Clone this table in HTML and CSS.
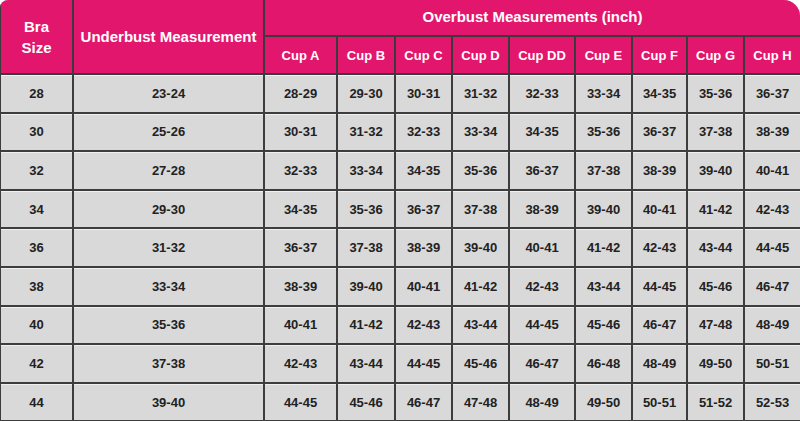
FILE: index.html
```html
<!DOCTYPE html>
<html>
<head>
<meta charset="utf-8">
<link rel="stylesheet" href="styles.css">
</head>
<body>
<div class="wrap">
<table class="chart">
<colgroup>
<col style="width:73px"><col style="width:191px"><col style="width:73px"><col style="width:58px"><col style="width:57px"><col style="width:57px"><col style="width:66px"><col style="width:57px"><col style="width:55px"><col style="width:57px"><col style="width:56px">
</colgroup>
<thead>
<tr class="h1">
<th rowspan="2" class="big">Bra<br>Size</th>
<th rowspan="2" class="big">Underbust Measurement</th>
<th colspan="9" class="over">Overbust Measurements (inch)</th>
</tr>
<tr class="h2">
<th>Cup A</th><th>Cup B</th><th>Cup C</th><th>Cup D</th><th>Cup DD</th><th>Cup E</th><th>Cup F</th><th>Cup G</th><th>Cup H</th>
</tr>
</thead>
<tbody>
<tr><td>28</td><td>23-24</td><td>28-29</td><td>29-30</td><td>30-31</td><td>31-32</td><td>32-33</td><td>33-34</td><td>34-35</td><td>35-36</td><td>36-37</td></tr>
<tr><td>30</td><td>25-26</td><td>30-31</td><td>31-32</td><td>32-33</td><td>33-34</td><td>34-35</td><td>35-36</td><td>36-37</td><td>37-38</td><td>38-39</td></tr>
<tr><td>32</td><td>27-28</td><td>32-33</td><td>33-34</td><td>34-35</td><td>35-36</td><td>36-37</td><td>37-38</td><td>38-39</td><td>39-40</td><td>40-41</td></tr>
<tr><td>34</td><td>29-30</td><td>34-35</td><td>35-36</td><td>36-37</td><td>37-38</td><td>38-39</td><td>39-40</td><td>40-41</td><td>41-42</td><td>42-43</td></tr>
<tr><td>36</td><td>31-32</td><td>36-37</td><td>37-38</td><td>38-39</td><td>39-40</td><td>40-41</td><td>41-42</td><td>42-43</td><td>43-44</td><td>44-45</td></tr>
<tr><td>38</td><td>33-34</td><td>38-39</td><td>39-40</td><td>40-41</td><td>41-42</td><td>42-43</td><td>43-44</td><td>44-45</td><td>45-46</td><td>46-47</td></tr>
<tr><td>40</td><td>35-36</td><td>40-41</td><td>41-42</td><td>42-43</td><td>43-44</td><td>44-45</td><td>45-46</td><td>46-47</td><td>47-48</td><td>48-49</td></tr>
<tr><td>42</td><td>37-38</td><td>42-43</td><td>43-44</td><td>44-45</td><td>45-46</td><td>46-47</td><td>46-48</td><td>48-49</td><td>49-50</td><td>50-51</td></tr>
<tr><td>44</td><td>39-40</td><td>44-45</td><td>45-46</td><td>46-47</td><td>47-48</td><td>48-49</td><td>49-50</td><td>50-51</td><td>51-52</td><td>52-53</td></tr>
</tbody>
</table>
</div>
</body>
</html>
```
FILE: styles.css
```css
html, body {
  margin: 0;
  padding: 0;
  background: #ffffff;
}
.wrap {
  width: 800px;
  height: 421px;
  overflow: hidden;
  border-radius: 8px 16px 0 0;
  background: #d9d9d9;
}
.chart {
  width: 800px;
  border-collapse: collapse;
  table-layout: fixed;
  font-family: "Liberation Sans", Arial, sans-serif;
  font-weight: bold;
  margin-left: -1px;
}
.chart th {
  background: #e3166e;
  color: #ffffff;
  font-size: 14px;
  border: 2px solid #3d3a3d;
  padding: 0;
  text-align: center;
  vertical-align: middle;
  line-height: 21px;
}
.chart th.big {
  font-size: 15px;
}
.chart thead tr:first-child th {
  border-top: none;
}
.chart tr.h1 {
  height: 36px;
}
.chart tr.h2 {
  height: 38px;
}
.chart th.over {
  font-size: 15px;
  padding-bottom: 2px;
}
.chart tr.h2 th {
  font-size: 13px;
}
.chart td {
  background: #d9d9d9;
  color: #222222;
  font-size: 13px;
  border: 2px solid #3d3d3d;
  text-align: center;
  vertical-align: middle;
  height: 36.6px;
  padding: 0;
  box-shadow: inset 0 1px 0 #f0f0f0;
}
.chart th:last-child, .chart td:last-child {
  border-right: none;
}
```
